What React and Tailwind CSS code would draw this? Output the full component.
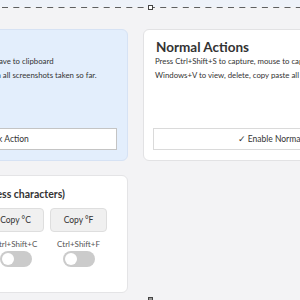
export default function App() {
  return (
    <div
      className="relative h-[300px] w-[300px] overflow-hidden bg-[#f3f3f5] text-[#333]"
      style={{ fontFamily: 'Lato, "Noto Sans", sans-serif' }}
    >
      {/* selection strip */}
      <div className="h-[7px] bg-[#eef2f9]" />

      <div className="ml-[-156px] pt-[22px] flex flex-col gap-[14px]">
        {/* Top cards */}
        <div className="flex gap-[15px]">
          <div className="w-[284px] h-[132px] shrink-0 rounded-md border border-[#d6e2f4] bg-[#e3eefc] px-[10px] pt-[8px] flex flex-col">
            <h2 className="text-[13.5px] font-bold leading-[18px] pl-[2px]">Quick Actions</h2>
            <p className="mt-[-2px] text-[7.8px] leading-[14px] whitespace-nowrap pl-[1px]">
              Press Ctrl+Shift+Q to capture image and save to clipboard
            </p>
            <p className="text-[7.8px] leading-[14px] whitespace-nowrap pl-[1px]">
              Windows+V to view clipboard history with all screenshots taken so far.
            </p>
            <button className="mt-auto mb-[10px] h-[22px] w-full border border-[#c4c4c4] bg-white text-[8.5px]">
              ✓ Enable Quick Action
            </button>
          </div>

          <div className="w-[284px] h-[132px] shrink-0 rounded-md border border-[#e2e2e4] bg-white px-[9px] pt-[8px] flex flex-col">
            <h2 className="text-[13.5px] font-bold leading-[18px] pl-[3px]">Normal Actions</h2>
            <p className="mt-[-2px] text-[7.8px] leading-[14px] whitespace-nowrap pl-[2px]">
              Press Ctrl+Shift+S to capture, mouse to capture a region
            </p>
            <p className="text-[7.8px] leading-[14px] whitespace-nowrap pl-[2px]">
              Windows+V to view, delete, copy paste all screenshots
            </p>
            <button className="mt-auto mb-[10px] h-[22px] w-full border border-[#dadada] bg-white text-[8.5px]">
              ✓ Enable Normal Actions
            </button>
          </div>
        </div>

        {/* Bottom card */}
        <div className="w-[284px] h-[118px] rounded-md border border-[#e4e4e6] bg-white px-[12px] pt-[10px]">
          <h3 className="text-[10.5px] font-bold leading-[16px] text-right pr-[50px]">
            Copy special (useless characters)
          </h3>
          <div className="mt-[6px] flex gap-[6px] pl-[4px]">
            {[
              { label: "Copy ©", key: "Ctrl+Shift+O" },
              { label: "Copy ™", key: "Ctrl+Shift+T" },
              { label: "Copy °C", key: "Ctrl+Shift+C" },
              { label: "Copy °F", key: "Ctrl+Shift+F" },
            ].map((item) => (
              <div key={item.label} className="w-[57px] flex flex-col items-center">
                <button className="h-[24px] w-full rounded-sm border border-[#dedede] bg-[#f0f0f0] text-[8.5px]">
                  {item.label}
                </button>
                <div className="mt-[6px] text-[8px] leading-[12px] text-[#555]">{item.key}</div>
                <div className="mt-[1px] h-[16px] w-[32px] rounded-full bg-[#cbcbcb] p-[2px] flex items-center">
                  <div className="h-[12px] w-[12px] rounded-full bg-white" />
                </div>
              </div>
            ))}
          </div>
        </div>
      </div>

      {/* selection outline */}
      <svg className="absolute left-0 top-0 pointer-events-none" width="300" height="300">
        <line x1="0" y1="7.5" x2="300" y2="7.5" stroke="#5f5f5f" strokeWidth="1" strokeDasharray="6 5.3" strokeDashoffset="-2" />
        <rect x="148.5" y="5.5" width="4" height="4" fill="#fff" stroke="#444" />
        <rect x="148.5" y="297.5" width="4" height="4" fill="#999" stroke="#444" />
      </svg>
    </div>
  );
}
